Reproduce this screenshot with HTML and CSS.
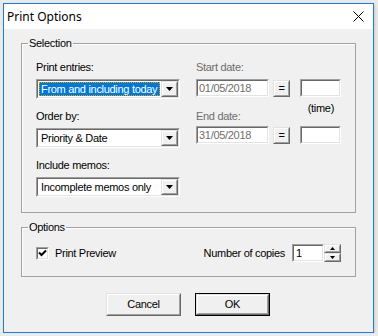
FILE: index.html
```html
<!DOCTYPE html>
<html lang="en">
<head>
  <meta charset="UTF-8">
  <title>Print Options</title>
  <link rel="stylesheet" href="styles.css">
</head>
<body>
  <div class="window">
    <div class="titlebar">
      <div class="title">Print Options</div>
      <div class="close">
        <svg width="11" height="11" viewBox="0 0 11 11"><path d="M0.5 0.5L10.5 10.5M10.5 0.5L0.5 10.5" stroke="#000" stroke-width="1"/></svg>
      </div>
    </div>

    <div class="dialog">
      <fieldset class="group selection">
        <legend>Selection</legend>
        <div class="selection-body">
          <div class="col-left">
            <div class="field">
              <div class="label">Print entries:</div>
              <div class="combo">
                <div class="combo-in">
                  <div class="combo-value"><span class="focused">From and including today</span></div>
                  <div class="drop-btn"><div class="drop-in"><svg width="7" height="4" viewBox="0 0 7 4"><path d="M0 0H7L3.5 4Z" fill="#000"/></svg></div></div>
                </div>
              </div>
            </div>
            <div class="field">
              <div class="label">Order by:</div>
              <div class="combo">
                <div class="combo-in">
                  <div class="combo-value"><span>Priority &amp; Date</span></div>
                  <div class="drop-btn"><div class="drop-in"><svg width="7" height="4" viewBox="0 0 7 4"><path d="M0 0H7L3.5 4Z" fill="#000"/></svg></div></div>
                </div>
              </div>
            </div>
            <div class="field">
              <div class="label">Include memos:</div>
              <div class="combo">
                <div class="combo-in">
                  <div class="combo-value"><span>Incomplete memos only</span></div>
                  <div class="drop-btn"><div class="drop-in"><svg width="7" height="4" viewBox="0 0 7 4"><path d="M0 0H7L3.5 4Z" fill="#000"/></svg></div></div>
                </div>
              </div>
            </div>
          </div>

          <div class="col-right">
            <div class="field">
              <div class="label disabled">Start date:</div>
              <div class="date-row">
                <div class="edit date"><div class="edit-in disabled">01/05/2018</div></div>
                <div class="btn eq"><div class="btn-in">=</div></div>
                <div class="edit time"><div class="edit-in"></div></div>
              </div>
            </div>
            <div class="field end">
              <div class="label-row">
                <div class="label disabled">End date:</div>
                <div class="label time-label">(time)</div>
              </div>
              <div class="date-row">
                <div class="edit date"><div class="edit-in disabled">31/05/2018</div></div>
                <div class="btn eq"><div class="btn-in">=</div></div>
                <div class="edit time"><div class="edit-in"></div></div>
              </div>
            </div>
          </div>
        </div>
      </fieldset>

      <fieldset class="group options">
        <legend>Options</legend>
        <div class="options-body">
          <div class="check">
            <div class="check-box"><div class="check-in"><svg width="9" height="9" viewBox="0 0 9 9"><path d="M1 3.5L3.5 6L8 1.5" stroke="#000" stroke-width="2" fill="none"/></svg></div></div>
            <span>Print Preview</span>
          </div>
          <div class="copies">
            <span>Number of copies</span>
            <div class="spin">
              <div class="edit spin-edit"><div class="edit-in">1</div></div>
              <div class="spin-btns">
                <div class="btn spin-btn"><div class="btn-in"><svg width="5" height="3" viewBox="0 0 5 3"><path d="M2.5 0L5 3H0Z" fill="#000"/></svg></div></div>
                <div class="btn spin-btn"><div class="btn-in"><svg width="5" height="3" viewBox="0 0 5 3"><path d="M0 0H5L2.5 3Z" fill="#000"/></svg></div></div>
              </div>
            </div>
          </div>
        </div>
      </fieldset>

      <div class="buttons">
        <div class="btn push"><div class="btn-in">Cancel</div></div>
        <div class="default"><div class="btn push"><div class="btn-in">OK</div></div></div>
      </div>
    </div>
  </div>
</body>
</html>
```

FILE: styles.css
```css
body {
  margin: 0;
  background-color: #ebebeb;
  font-family: "Liberation Sans", Arial, sans-serif;
  font-size: 11px;
  line-height: 13px;
  letter-spacing: -0.3px;
  color: #000;
}

.window {
  margin: 3px 0 0 3px;
  width: 371px;
  height: 330px;
  box-sizing: border-box;
  border: 1px solid #1a7fd5;
  background-color: #f0f0f0;
  box-shadow: 1px 1px 3px rgba(0, 0, 0, 0.15);
}

.titlebar {
  height: 25px;
  background-color: #fff;
  display: flex;
  justify-content: space-between;
  align-items: center;
  padding: 0 9px 0 3px;
}

.title {
  font-family: "Noto Sans", sans-serif;
  font-size: 12px;
  line-height: 16px;
  letter-spacing: 0;
}

.close svg {
  display: block;
}

.dialog {
  padding: 8px 17px 0;
}

/* Group boxes */
.group {
  margin: 0;
  padding: 0;
  border: 1px solid #a0a0a0;
  box-shadow: inset 1px 1px 0 #fff;
}

.group legend {
  margin-left: 6px;
  padding: 0 1px;
  line-height: 13px;
}

.selection {
  height: 176px;
  box-sizing: border-box;
}

.selection-body {
  display: flex;
  gap: 16px;
  padding: 11px 0 0 14px;
}

.col-left {
  width: 144px;
  display: flex;
  flex-direction: column;
  gap: 11px;
}

.col-right {
  width: 145px;
  display: flex;
  flex-direction: column;
}

.label {
  margin-bottom: 5px;
}

.disabled {
  color: #6d6d6d;
}

/* 3D borders */
.combo,
.edit {
  border: 1px solid;
  border-color: #a0a0a0 #fff #fff #a0a0a0;
}

.combo-in,
.edit-in {
  border: 1px solid;
  border-color: #696969 #e3e3e3 #e3e3e3 #696969;
  background-color: #fff;
}

.combo {
  height: 18px;
}

.combo-in {
  height: 100%;
  box-sizing: border-box;
  display: flex;
}

.combo-value {
  flex: 1;
  padding: 1px;
  white-space: nowrap;
  overflow: hidden;
}

.combo-value span {
  display: block;
  height: 12px;
  line-height: 12px;
  padding: 0 1px;
  border: 1px dotted transparent;
}

.combo-value .focused {
  background-color: #0078d7;
  color: #fff;
  border-color: #e8a000;
}

.drop-btn,
.btn {
  border: 1px solid;
  border-color: #e3e3e3 #696969 #696969 #e3e3e3;
  background-color: #f0f0f0;
  box-sizing: border-box;
}

.drop-in,
.btn-in {
  height: 100%;
  box-sizing: border-box;
  border: 1px solid;
  border-color: #fff #a0a0a0 #a0a0a0 #fff;
  display: flex;
  align-items: center;
  justify-content: center;
}

.drop-btn {
  width: 17px;
}

.drop-btn svg,
.spin-btn svg {
  display: block;
}

/* Right column */
.date-row {
  display: flex;
  align-items: center;
  height: 18px;
}

.edit {
  height: 18px;
  box-sizing: border-box;
}

.edit-in {
  height: 100%;
  box-sizing: border-box;
  padding-left: 1px;
  line-height: 14px;
}

.date {
  width: 73px;
}

.eq {
  width: 17px;
  height: 17px;
  margin-left: 4px;
  line-height: 13px;
}

.time {
  width: 41px;
  margin-left: 10px;
}

.field.end {
  margin-top: 11px;
}

.label-row {
  display: flex;
  justify-content: space-between;
  align-items: flex-start;
  margin-bottom: 3px;
}

.label-row .label {
  margin-top: 2px;
  margin-bottom: 0;
}

.label-row .time-label {
  margin-right: 7px;
  margin-top: -6px;
}

/* Options */
.options {
  margin-top: 8px;
  height: 56px;
  box-sizing: border-box;
}

.options-body {
  display: flex;
  justify-content: space-between;
  align-items: center;
  padding: 10px 14px 0 14px;
}

.check {
  display: flex;
  align-items: center;
  gap: 6px;
}

.check-box {
  width: 13px;
  height: 13px;
  box-sizing: border-box;
  border: 1px solid;
  border-color: #a0a0a0 #fff #fff #a0a0a0;
}

.check-in {
  height: 100%;
  box-sizing: border-box;
  border: 1px solid;
  border-color: #696969 #e3e3e3 #e3e3e3 #696969;
  background-color: #fff;
  display: flex;
  align-items: center;
  justify-content: center;
}

.check-in svg {
  display: block;
}

.copies {
  display: flex;
  align-items: center;
  gap: 7px;
}

.spin {
  display: flex;
}

.spin-edit {
  width: 32px;
}

.spin-edit .edit-in {
  padding-left: 2px;
}

.spin-btns {
  display: flex;
  flex-direction: column;
}

.spin-btn {
  width: 17px;
  height: 9px;
}

/* Push buttons */
.buttons {
  display: flex;
  justify-content: center;
  gap: 14px;
  margin-top: 16px;
  padding-right: 1px;
}

.push {
  width: 75px;
  height: 23px;
}

.default {
  border: 1px solid #000;
}

.default .push {
  width: 73px;
  height: 21px;
}
```
